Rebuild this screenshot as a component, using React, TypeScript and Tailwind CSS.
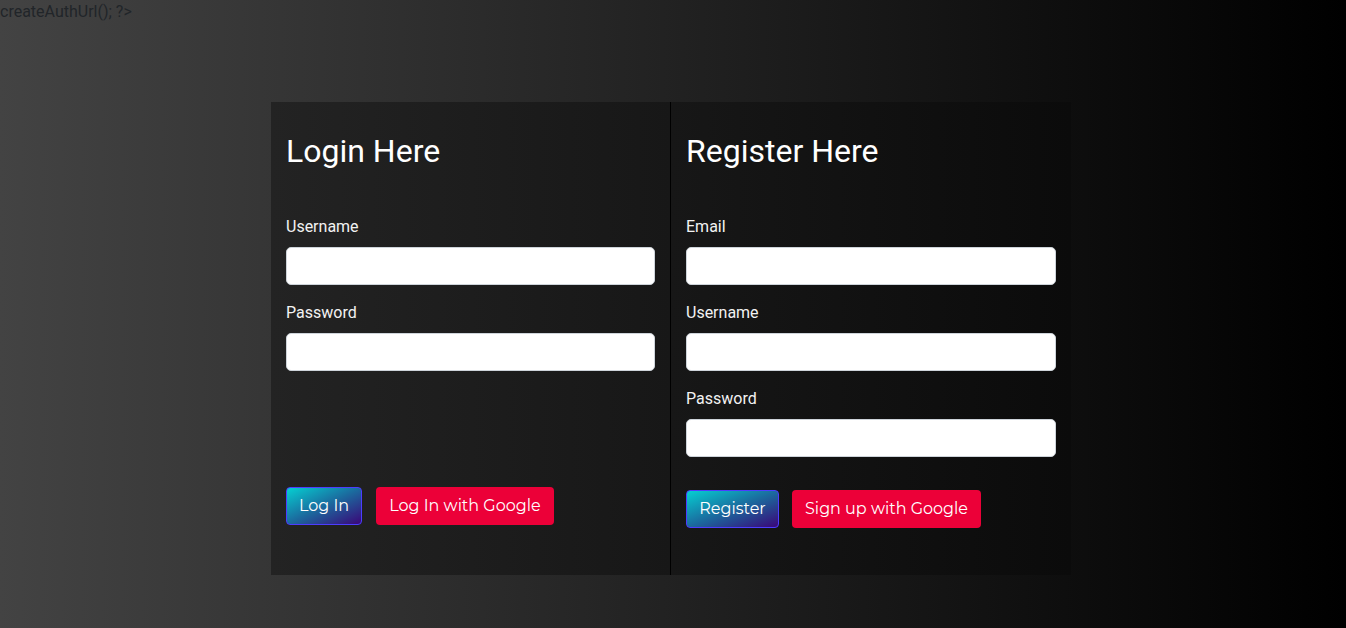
import React from 'react'

const roboto = { fontFamily: 'Roboto, "Liberation Sans", sans-serif' }

const Field = ({ label, type = 'text', last = false }: { label: string; type?: string; last?: boolean }) => (
  <div className={last ? '' : 'mb-4'}>
    <label className="block text-[16px] leading-6 text-[#f2f2f2] mb-2">{label}</label>
    <input
      type={type}
      className="block w-full h-[38px] rounded-[5px] bg-white border border-[#ced4da] px-3 text-[#212529] outline-none"
    />
  </div>
)

const GradientButton = ({ children, w }: { children: React.ReactNode; w: string }) => (
  <button
    className={`${w} h-[38px] rounded-[4px] border border-[#4d3cff] bg-[linear-gradient(to_bottom_right,#05d0d2,#1b6a9e,#3a0678)] text-white text-[16px] font-['Montserrat','Inter',sans-serif]`}
  >
    {children}
  </button>
)

const GoogleButton = ({ children, w }: { children: React.ReactNode; w: string }) => (
  <button
    className={`${w} h-[38px] rounded-[4px] bg-[#ec0038] text-white text-[16px] font-['Montserrat','Inter',sans-serif]`}
  >
    {children}
  </button>
)

export default function App() {
  return (
    <div
      className="min-h-screen w-full bg-[linear-gradient(to_right,#434343,#000000)]"
      style={roboto}
    >
      <div className="text-[16px] leading-6 text-[#212529]">createAuthUrl(); ?&gt;</div>

      <div className="flex justify-center pr-[4px] mt-[78px]">
        <div className="flex w-[800px] bg-[linear-gradient(to_right,#232323,#0b0b0b)]">
          {/* Login */}
          <div className="w-[400px] px-[15px] pt-[30px] border-r border-black flex flex-col">
            <h2 className="text-[32px] leading-[38px] font-normal text-white mb-[45px]">Login Here</h2>
            <Field label="Username" />
            <Field label="Password" type="password" last />
            <div className="flex gap-[14px] mt-[116px]">
              <GradientButton w="w-[76px]">Log In</GradientButton>
              <GoogleButton w="w-[178px]">Log In with Google</GoogleButton>
            </div>
          </div>

          {/* Register */}
          <div className="w-[400px] px-[15px] pt-[30px] pb-[47px]">
            <h2 className="text-[32px] leading-[38px] font-normal text-white mb-[45px]">Register Here</h2>
            <Field label="Email" type="email" />
            <Field label="Username" />
            <Field label="Password" type="password" last />
            <div className="flex items-center gap-[13px] mt-[33px]">
              <GradientButton w="w-[93px]">Register</GradientButton>
              <GoogleButton w="w-[189px]">Sign up with Google</GoogleButton>
            </div>
          </div>
        </div>
      </div>
    </div>
  )
}
